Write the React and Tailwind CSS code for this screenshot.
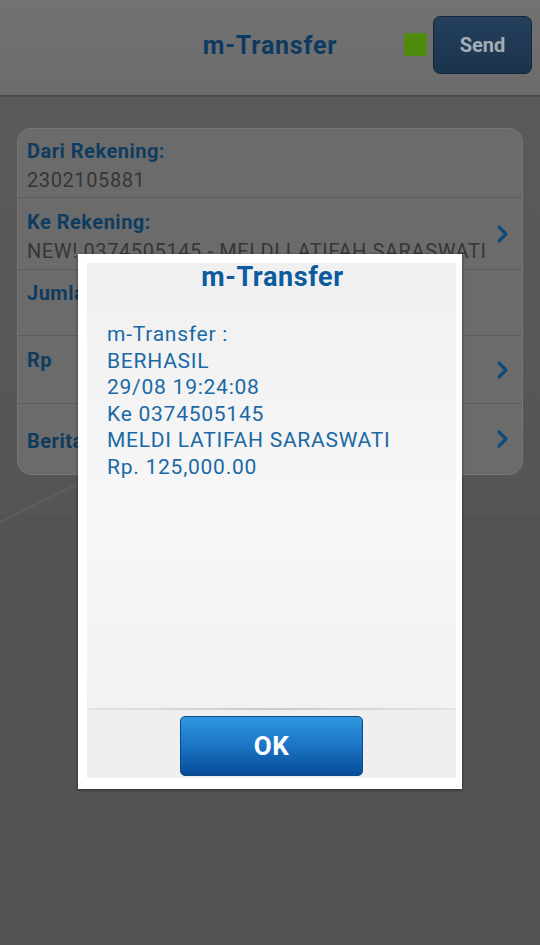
import React from "react";

function Chevron() {
  return (
    <svg width="14" height="20" viewBox="0 0 14 20" className="shrink-0">
      <path d="M3 3 L10 10 L3 17" fill="none" stroke="#0f4a78" strokeWidth="3.2" strokeLinecap="round" strokeLinejoin="round" />
    </svg>
  );
}

function Row({ label, value, chevron, h, pt, last }) {
  return (
    <div
      className={`flex items-center pl-[9px] pr-[12px] ${last ? "" : "border-b border-[#5c5c5c]"}`}
      style={{ height: h }}
    >
      <div className="flex-1 min-w-0 self-start" style={{ paddingTop: pt }}>
        <div className="text-[20px] leading-[24px] font-bold tracking-[0.5px] text-[#0e3c60]">{label}</div>
        {value !== undefined && (
          <div className="mt-[2px] text-[20px] leading-[30px] tracking-[0.6px] text-[#363636] whitespace-nowrap overflow-hidden">{value}</div>
        )}
      </div>
      {chevron && <Chevron />}
    </div>
  );
}

export default function App() {
  return (
    <div
      className="relative w-[540px] h-[945px] overflow-hidden bg-[#535353]"
      style={{ fontFamily: "Roboto, 'Liberation Sans', sans-serif" }}
    >
      {/* Header */}
      <div className="h-[97px] bg-gradient-to-b from-[#727272] to-[#6c6c6c] border-b-2 border-[#4c4c4c] flex items-center relative">
        <div className="flex-1 text-center text-[25px] font-bold tracking-[0.8px] text-[#0d3a60] pb-[3px]">m-Transfer</div>
        <div className="absolute left-[404px] top-[33px] w-[23px] h-[23px] rounded-[3px] bg-[#4e8b0c]" />
        <div className="absolute left-[433px] top-[16px] w-[99px] h-[58px] rounded-[7px] bg-gradient-to-b from-[#25405c] to-[#1b344e] border border-[#142638] flex items-center justify-center text-[20px] font-bold text-[#a3adb5]">
          Send
        </div>
      </div>

      <div className="bg-gradient-to-b from-[#5a5a5a] to-[#555555] pt-[31px] px-[17px] pb-[40px]">
        <div className="rounded-[14px] bg-[#6b6b6b] border border-[#777] overflow-hidden">
          <Row label="Dari Rekening:" value="2302105881" h={69} pt={10} />
          <Row label="Ke Rekening:" value="NEW! 0374505145 - MELDI LATIFAH SARASWATI" chevron h={72} pt={12} />
          <Row label="Jumlah" h={66} pt={11} />
          <Row label="Rp" chevron h={68} pt={12} />
          <Row label="Berita" chevron h={70} pt={25} last />
        </div>
      </div>

      {/* faint diagonal line in background */}
      <svg className="absolute left-0 top-[470px]" width="90" height="60">
        <line x1="0" y1="52" x2="90" y2="8" stroke="#5e5e5e" strokeWidth="2" />
      </svg>

      {/* Dialog */}
      <div className="absolute left-[78px] top-[254px] w-[384px] h-[535px] bg-white p-[9px] pr-[6px] pb-[11px] shadow-[0_1px_3px_rgba(0,0,0,0.5)]">
        <div className="h-full flex flex-col bg-gradient-to-b from-[#f0f0f0] via-[#f7f7f7] to-[#efefef]">
          <div className="flex-1 flex flex-col">
            <div className="text-center text-[27px] font-bold tracking-[0.6px] text-[#0b5b9e] leading-[28px] pl-[2px]">m-Transfer</div>
            <div className="pl-[20px] pt-[30px] text-[21px] leading-[26.6px] tracking-[0.75px] text-[#1a69a6]">
              <div>m-Transfer :</div>
              <div>BERHASIL</div>
              <div>29/08 19:24:08</div>
              <div>Ke 0374505145</div>
              <div>MELDI LATIFAH SARASWATI</div>
              <div>Rp. 125,000.00</div>
            </div>
          </div>
          <div className="h-[2px] bg-gradient-to-r from-[#e4e4e4] via-[#c9c9c9] to-[#e4e4e4]" />
          <div className="h-[68px] flex items-start justify-center pt-[6px] bg-[#efefef]">
            <div className="w-[183px] h-[60px] rounded-[5px] bg-gradient-to-b from-[#2f97e0] via-[#1b74c4] to-[#074c97] flex items-center justify-center text-white text-[26px] font-bold tracking-[0.5px] border border-[#0a4a8a]">
              OK
            </div>
          </div>
        </div>
      </div>
    </div>
  );
}
